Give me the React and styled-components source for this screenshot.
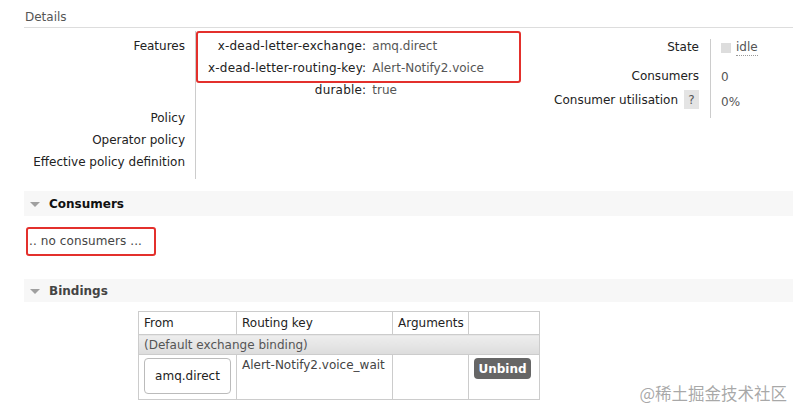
import React from 'react'
import styled, {createGlobalStyle} from 'styled-components'

const GlobalStyle = createGlobalStyle`
body{
    margin:0;
    background:#fff;
    font-family:"DejaVu Sans", Verdana, sans-serif;
    font-size:12px;
    color:#222;
}
`

const RED = '#e3302c'

export default function App() {
    return (
        <Page>
            <GlobalStyle/>
            <DetailsTitle>Details</DetailsTitle>
            <DetailsBody>
                <LeftGrid>
                    <Label top={7}>Features</Label>
                    <Value relative bottom={6}>
                        <Highlight/>
                        <Args>
                            <ArgKey>x-dead-letter-exchange:</ArgKey>
                            <ArgVal>amq.direct</ArgVal>
                            <ArgKey>x-dead-letter-routing-key:</ArgKey>
                            <ArgVal>Alert-Notify2.voice</ArgVal>
                            <ArgKey>durable:</ArgKey>
                            <ArgVal>true</ArgVal>
                        </Args>
                    </Value>
                    <Label top={3}>Policy</Label>
                    <Value/>
                    <Label top={3}>Operator policy</Label>
                    <Value/>
                    <Label top={3}>Effective policy definition</Label>
                    <Value bottom={6}/>
                </LeftGrid>
                <RightGrid>
                    <RLabel top={0}>State</RLabel>
                    <RValue top={0}><StateBox/><Idle>idle</Idle></RValue>
                    <RLabel top={8}>Consumers</RLabel>
                    <RValue top={9}>0</RValue>
                    <RLabel top={4}>Consumer utilisation<Help>?</Help></RLabel>
                    <RValue top={6}>0%</RValue>
                </RightGrid>
            </DetailsBody>

            <SectionHeader gap={12} height={25}>
                <Arrow/>
                <SectionTitle color="#111">Consumers</SectionTitle>
            </SectionHeader>
            <NoConsumers>.. no consumers ...</NoConsumers>

            <SectionHeader gap={23} height={23}>
                <Arrow/>
                <SectionTitle color="#444">Bindings</SectionTitle>
            </SectionHeader>

            <Bindings>
                <colgroup>
                    <col style={{width:98}}/>
                    <col style={{width:156}}/>
                    <col style={{width:76}}/>
                    <col style={{width:71}}/>
                </colgroup>
                <thead>
                    <tr>
                        <Th>From</Th>
                        <Th>Routing key</Th>
                        <Th>Arguments</Th>
                        <Th></Th>
                    </tr>
                </thead>
                <tbody>
                    <tr>
                        <DefaultCell colSpan={4}>(Default exchange binding)</DefaultCell>
                    </tr>
                    <tr>
                        <Td><FromButton>amq.direct</FromButton></Td>
                        <Td>Alert-Notify2.voice_wait</Td>
                        <Td></Td>
                        <Td><Unbind>Unbind</Unbind></Td>
                    </tr>
                </tbody>
            </Bindings>

            <Watermark>@稀土掘金技术社区</Watermark>
        </Page>
    )
}

const Page = styled.div`
position:relative;
height:411px;
padding-left:24px;
overflow:hidden;
`

const DetailsTitle = styled.div`
padding:9px 0 2px 1px;
line-height:16px;
color:#555;
border-bottom:1px solid #ddd;
`

const DetailsBody = styled.div`
display:flex;
align-items:flex-start;
margin-top:3px;
`

const LeftGrid = styled.div`
display:grid;
grid-template-columns:171px auto;
`

const Label = styled.div`
text-align:right;
padding:${p=>p.top}px 10px 0 0;
line-height:16px;
color:#222;
`

const Value = styled.div`
position:${p=>p.relative?'relative':'static'};
border-left:1px solid #ccc;
min-height:22px;
padding-bottom:${p=>p.bottom||0}px;
`

const Highlight = styled.div`
position:absolute;
left:0;
top:0;
width:325px;
height:52px;
box-sizing:border-box;
border:2px solid ${RED};
border-radius:3px;
pointer-events:none;
`

const Args = styled.div`
display:grid;
grid-template-columns:auto auto;
padding-top:4px;
`

const ArgKey = styled.div`
text-align:right;
padding:3px 0 3px 12px;
line-height:16px;
letter-spacing:0.2px;
color:#222;
`

const ArgVal = styled.div`
padding:3px 0 3px 6px;
line-height:16px;
color:#555;
`

const RightGrid = styled.div`
display:grid;
grid-template-columns:auto 83px;
grid-template-rows:21px 28px 30px;
margin-left:auto;
margin-top:8px;
`

const RLabel = styled.div`
display:flex;
justify-content:flex-end;
align-items:flex-start;
padding:${p=>p.top}px 11px 0 0;
line-height:16px;
color:#222;
`

const RValue = styled.div`
display:flex;
align-items:flex-start;
border-left:1px solid #ccc;
padding:${p=>p.top}px 0 0 10px;
line-height:16px;
color:#555;
`

const StateBox = styled.span`
width:10px;
height:10px;
margin-top:4px;
background:#ddd;
`

const Idle = styled.span`
margin-left:5px;
line-height:16px;
border-bottom:1px dotted #999;
color:#555;
`

const Help = styled.span`
display:inline-flex;
align-items:center;
justify-content:center;
width:15px;
height:19px;
margin:-2px 0 0 6px;
background:#e4e4e4;
color:#555;
`

const SectionHeader = styled.div`
display:flex;
align-items:center;
gap:9px;
height:${p=>p.height}px;
margin-top:${p=>p.gap}px;
padding-left:6px;
background:#f7f7f7;
`

const Arrow = styled.span`
width:0;
height:0;
border-left:5.5px solid transparent;
border-right:5.5px solid transparent;
border-top:5px solid #a0a0a0;
margin-top:2px;
`

const SectionTitle = styled.span`
font-weight:bold;
color:${p=>p.color};
line-height:16px;
`

const NoConsumers = styled.div`
display:inline-block;
margin:11px 0 0 2px;
padding:4px 12px 5px 1px;
line-height:16px;
letter-spacing:0.1px;
border:2px solid ${RED};
border-radius:3px;
color:#444;
`

const Bindings = styled.table`
margin:9px 0 0 114px;
width:402px;
table-layout:fixed;
border-collapse:collapse;
`

const Th = styled.th`
border:1px solid #ccc;
padding:3px 5px;
line-height:16px;
text-align:left;
font-weight:normal;
color:#222;
`

const DefaultCell = styled.td`
border:1px solid #ccc;
padding:2px 5px 1px;
line-height:16px;
color:#555;
background:linear-gradient(#eee, #dcdcdc);
`

const Td = styled.td`
border:1px solid #ccc;
padding:2px 5px 5px;
vertical-align:top;
line-height:16px;
color:#444;
white-space:nowrap;
`

const FromButton = styled.div`
display:flex;
align-items:center;
justify-content:center;
width:87px;
height:36px;
box-sizing:border-box;
margin-top:1px;
border:1px solid #bbb;
border-radius:4px;
background:#fff;
color:#222;
`

const Unbind = styled.div`
display:flex;
align-items:center;
justify-content:center;
width:57px;
height:21px;
margin-top:1px;
border-radius:4px;
background:#666;
color:#fff;
font-weight:bold;
`

const Watermark = styled.div`
position:absolute;
right:6px;
bottom:6px;
font-family:"Noto Sans CJK SC", sans-serif;
font-size:16.5px;
color:rgba(140,140,140,0.75);
text-shadow:0 0 1px #fff;
`
